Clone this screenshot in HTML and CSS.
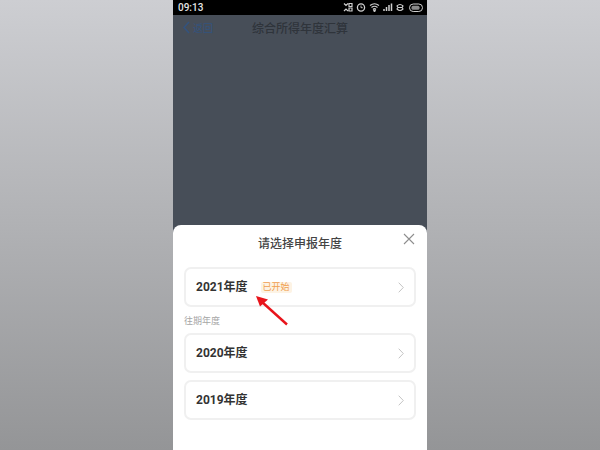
FILE: index.html
```html
<!DOCTYPE html>
<html lang="zh">
<head>
<meta charset="utf-8">
<title>综合所得年度汇算</title>
<link rel="stylesheet" href="styles.css">
</head>
<body>
<div class="stage">
  <main class="phone">
    <header class="status">
      <span class="time">09:13</span>
      <svg class="status-icons" width="80" height="11" viewBox="0 0 80 11" fill="none" stroke="#cfcfcf">
        <path d="M1 1.500l2 2 2-2M1 9l2-2 2 2M6 1.500h3v3H6zM6 6h3v3H6z" stroke-width="1.200"/>
        <circle cx="18" cy="5.500" r="3.600" stroke-width="1.300"/>
        <path d="M18 3.500v2.200h1.700" stroke-width=".9"/>
        <path d="M27 3.500q4.500-3.500 9 0M28.500 5.500q3-2.500 6 0M30 7.500q1.500-1.500 3 0" stroke-width="1.200"/>
        <path d="M31.500 10l-1-1.500h2z" fill="#cfcfcf"/>
        <path d="M41 9v-2M43.500 9v-4M46 9V3M48.500 9V1.500" stroke-width="1.500"/>
        <path d="M54 4q3-3 6 0l-1 1.500h-4zM54 7q3 3 6 0l-1-1.500h-4z" stroke-width="1.100"/>
        <rect x="66.500" y="2" width="13" height="7.500" rx="3.700" stroke-width="1"/>
        <rect x="68.500" y="3.800" width="8" height="4" rx="1.500" fill="#8a8a8a" stroke="none"/>
      </svg>
    </header>
    <nav class="navbar">
      <span class="back">
        <svg class="back-chevron" width="7" height="13" viewBox="0 0 7 13" fill="none" stroke="#33537f" stroke-width="1.500"><path d="M6 1L1 6.500 6 12"/></svg>
        返回
      </span>
      <h1 class="page-title">综合所得年度汇算</h1>
    </nav>
    <div class="overlay-fill"></div>
    <section class="sheet">
      <div class="sheet-head">
        <h2 class="sheet-title">请选择申报年度</h2>
        <svg class="close" width="12" height="12" viewBox="0 0 12 12" fill="none" stroke="#8e8e8e" stroke-width="1.100"><path d="M1 1l10 10M11 1L1 11"/></svg>
      </div>
      <div class="year-card">
        <span class="year">2021年度</span>
        <span class="badge">已开始</span>
        <svg class="chev" width="6" height="11" viewBox="0 0 6 11" fill="none" stroke="#c4c4c4" stroke-width="1"><path d="M.7.7l4.600 4.800-4.600 4.800"/></svg>
      </div>
      <div class="past-label">往期年度</div>
      <div class="year-card">
        <span class="year">2020年度</span>
        <svg class="chev" width="6" height="11" viewBox="0 0 6 11" fill="none" stroke="#c4c4c4" stroke-width="1"><path d="M.7.7l4.600 4.800-4.600 4.800"/></svg>
      </div>
      <div class="year-card">
        <span class="year">2019年度</span>
        <svg class="chev" width="6" height="11" viewBox="0 0 6 11" fill="none" stroke="#c4c4c4" stroke-width="1"><path d="M.7.700l4.600 4.800-4.600 4.800"/></svg>
      </div>
      <svg class="arrow" width="36" height="34" viewBox="0 0 36 34" fill="none">
        <path d="M33 30.500L8 8" stroke="#e8141b" stroke-width="2.400"/>
        <path d="M2 2l12 3.500-8 7z" fill="#e8141b"/>
      </svg>
    </section>
  </main>
</div>
</body>
</html>
```
FILE: styles.css
```css
* { box-sizing: border-box; }
html, body { margin: 0; padding: 0; }
body {
  width: 600px;
  height: 450px;
  overflow: hidden;
  font-family: "Roboto", "Noto Sans CJK SC", sans-serif;
}
h1, h2 { margin: 0; font-weight: 400; }
.stage {
  width: 600px;
  height: 450px;
  display: flex;
  justify-content: center;
  background: linear-gradient(180deg, #cdced2 0%, #949597 100%);
}
.phone {
  width: 254px;
  height: 450px;
  display: flex;
  flex-direction: column;
  background: #474e58;
}
.status {
  height: 15px;
  flex: none;
  background: #000;
  display: flex;
  align-items: center;
  justify-content: space-between;
  padding: 0 4px 0 5px;
  color: #e4e4e4;
}
.time { font-size: 10px; font-weight: 500; }
.status-icons { display: block; }
.navbar {
  height: 27px;
  flex: none;
  display: flex;
  align-items: center;
  position: relative;
  padding: 0 0 2px 10px;
}
.back {
  display: flex;
  align-items: center;
  gap: 3px;
  color: #33537f;
  font-size: 10px;
}
.page-title {
  position: absolute;
  left: 0;
  right: 0;
  text-align: center;
  font-size: 12px;
  font-weight: 500;
  color: #2f343b;
}
.overlay-fill { flex: 1; }
.sheet {
  flex: none;
  height: 225px;
  background: #fff;
  border-radius: 8px 8px 0 0;
  padding: 0 11px;
  position: relative;
}
.sheet-head {
  height: 42px;
  display: flex;
  align-items: center;
  justify-content: center;
  position: relative;
  padding-bottom: 8px;
}
.sheet-title {
  font-size: 12px;
  font-weight: 500;
  color: #444;
}
.close { position: absolute; right: 1px; top: 8px; }
.year-card {
  height: 40px;
  display: flex;
  align-items: center;
  padding: 0 10px 2px;
  border: 2px solid #f0f0f0;
  border-radius: 7px;
  background: #fff;
  margin-bottom: 7px;
}
.year {
  font-size: 12px;
  font-weight: 700;
  color: #333;
  margin-bottom: 2px;
}
.badge {
  margin-left: 13px;
  padding: 0 2px;
  font-size: 9px;
  line-height: 11px;
  color: #f0a050;
  background: #fdf3e4;
  border-radius: 2px;
  margin-top: 2px;
}
.chev { margin-left: auto; margin-top: 2px; }
.past-label {
  font-size: 9px;
  line-height: 12px;
  color: #a6a6a6;
  margin: 8px 0 6px;
}
.arrow { position: absolute; left: 81px; top: 69px; }
```
